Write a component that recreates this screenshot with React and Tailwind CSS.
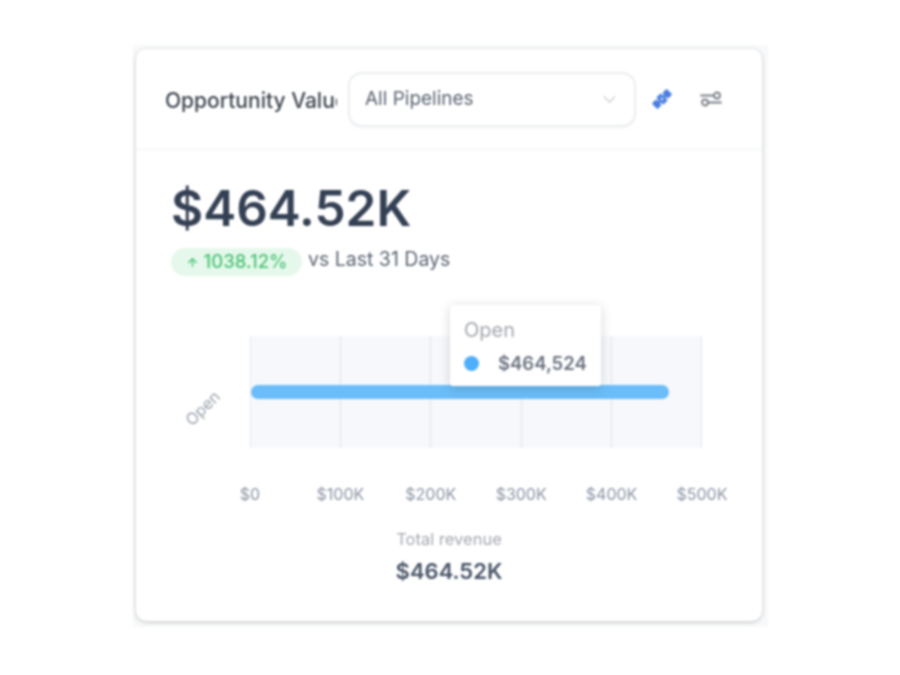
import { ChevronDown, ArrowUp } from "lucide-react";

const ticks = ["$0", "$100K", "$200K", "$300K", "$400K", "$500K"];

function PinIcon() {
  return (
    <svg width="24" height="24" viewBox="0 0 24 24" fill="#4a7ee0">
      <g transform="rotate(-45 12 12)">
        <rect x="1.5" y="8" width="6" height="8" rx="1" />
        <rect x="8.8" y="7" width="6.4" height="10" rx="1" />
        <rect x="16.5" y="8" width="6" height="8" rx="1" />
        <rect x="6" y="10.5" width="12" height="3" />
        <circle cx="12" cy="12" r="1.3" fill="#dbe6fb" />
      </g>
    </svg>
  );
}

function FilterIcon() {
  return (
    <svg width="22" height="18" viewBox="0 0 22 18" fill="none" stroke="#7b8088" strokeWidth="1.8" strokeLinecap="round">
      <path d="M1 5.5h13" />
      <circle cx="17" cy="5.5" r="3" />
      <path d="M8 12.5h13" />
      <circle cx="5" cy="12.5" r="3" />
    </svg>
  );
}

function Chart() {
  return (
    <div className="mt-[60px] flex">
      <div className="w-[114px] shrink-0 flex justify-end items-center">
        <span className="mr-[27px] mt-[-25px] -rotate-45 text-[16px] text-[#9ca3af]">Open</span>
      </div>
      <div className="w-[452px]">
        <div className="relative h-[112px] bg-[#f6f8fc] flex border-l border-[#e6e9ef]">
          {[0, 1, 2, 3, 4].map((i) => (
            <div key={i} className="flex-1 border-r border-[#e1e4ea]" />
          ))}
          <div className="absolute left-0 top-[49px] h-[14px] w-[418px] rounded-full bg-[#6abdf8]" />
          <div className="absolute left-[199px] top-[-31px] w-[151px] h-[81px] bg-white rounded-[3px] shadow-[0_2px_12px_rgba(0,0,0,0.16)] px-[14px] pt-[12px]">
            <div className="text-[20px] leading-[26px] text-[#a3a7ad]">Open</div>
            <div className="mt-[7px] flex items-center">
              <span className="w-[15px] h-[15px] rounded-full bg-[#4daefb]" />
              <span className="ml-[19px] text-[18.5px] leading-[26px] font-semibold text-[#6b7280]">$464,524</span>
            </div>
          </div>
        </div>
        <div className="mt-[36px] flex justify-between -mx-[10px]">
          {ticks.map((t) => (
            <span key={t} className="w-[20px] flex justify-center whitespace-nowrap text-[16px] leading-[20px] text-[#8b93a3]">
              {t}
            </span>
          ))}
        </div>
      </div>
    </div>
  );
}

export default function App() {
  return (
    <div className="w-[900px] h-[675px] bg-white pt-[45px] pl-[133px] font-['Inter',sans-serif] blur-[0.9px]">
      <div className="w-[635px] h-[582px] bg-[#f8f9fa] pt-[4px] pl-[3px]">
        <div className="w-[626px] h-[572px] bg-white rounded-[10px] shadow-[0_1px_4px_rgba(0,0,0,0.22)]">
          <div className="h-[101px] border-b border-[#f1f2f4] pl-[29px] flex items-center">
            <div className="w-[172px] overflow-hidden whitespace-nowrap text-[21px] font-medium text-[#3f4650] mt-[3px]">
              Opportunity Value
            </div>
            <div className="ml-[11px] w-[288px] h-[55px] rounded-[14px] border-2 border-[#eceef1] bg-white flex items-center justify-between pl-[15px] pr-[14px] shadow-[0_1px_2px_rgba(0,0,0,0.05)]">
              <span className="text-[19px] text-[#5b6472]">All Pipelines</span>
              <ChevronDown size={21} strokeWidth={1.5} className="text-[#c4c8cf]" />
            </div>
            <div className="ml-[14px] mb-[1px]">
              <PinIcon />
            </div>
            <div className="ml-[26px]">
              <FilterIcon />
            </div>
          </div>
          <div className="pl-[35px]">
            <div className="pt-[28px] text-[49.5px] leading-[60px] font-semibold text-[#344054]">$464.52K</div>
            <div className="mt-[10px] flex items-start">
              <div className="h-[28px] w-[131px] rounded-full bg-[#e6f8ec] flex items-center justify-center gap-[5px] text-[#4cc477] text-[18.5px] font-medium">
                <ArrowUp size={13} strokeWidth={2.5} />
                <span>1038.12%</span>
              </div>
              <span className="ml-[6px] -mt-[1px] text-[19.5px] leading-[24px] text-[#5b6472]">vs Last 31 Days</span>
            </div>
          </div>
          <Chart />
          <div className="mt-[25px] text-center text-[16.5px] leading-[20px] text-[#a3a8b0]">Total revenue</div>
          <div className="mt-[8px] text-center text-[22px] leading-[28px] font-semibold text-[#475467]">$464.52K</div>
        </div>
      </div>
    </div>
  );
}
